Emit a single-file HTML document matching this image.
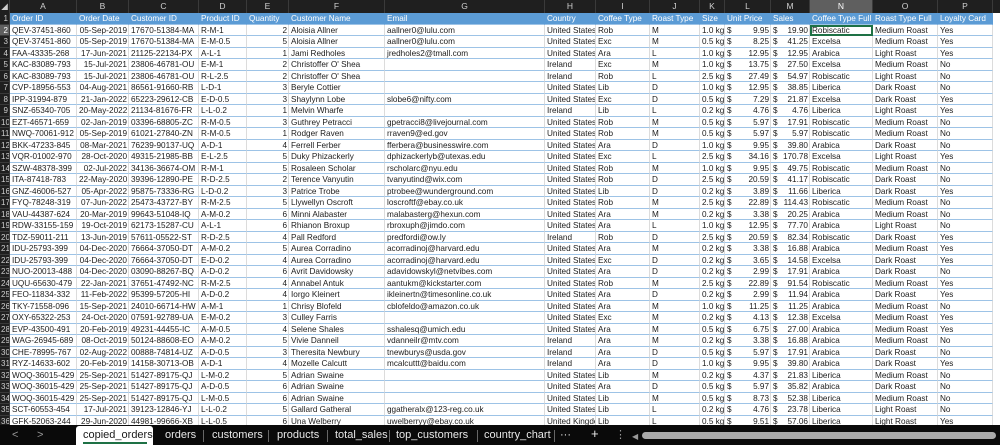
<!DOCTYPE html>
<html><head><meta charset="utf-8"><style>
*{margin:0;padding:0;box-sizing:border-box}
body{width:1000px;height:445px;overflow:hidden;background:#fff;font-family:"Liberation Sans",Arial,sans-serif;font-size:8.2px;color:#1c1c1c;position:relative}
#ch{position:absolute;left:0;top:0;height:13px;width:1000px;background:#1f1f1f;display:grid;grid-template-columns:10px 67px 52px 70px 48px 42px 96px 160px 51px 54px 50px 25px 46px 39px 63px 65px 55px 7px}
#ch span{color:#cfcfcf;text-align:center;line-height:13px;border-right:1px solid #3a3a3a;font-size:8.5px}
#ch span.sel{background:#5f5f5f;color:#fff}
#g{position:absolute;left:0;top:13px;width:1000px;display:grid;grid-template-columns:10px 67px 52px 70px 48px 42px 96px 160px 51px 54px 50px 25px 46px 39px 63px 65px 55px 7px;grid-auto-rows:11.5px}
#g i{font-style:normal;white-space:nowrap;overflow:hidden;padding:0 1px 0 2px;line-height:11px;border-right:1px solid #dcdcdc;border-bottom:1px solid #9dc3e6}
#g i.h{background:#1f1f1f;color:#cfcfcf;text-align:right;padding:0 1px;border-right:1px solid #3a3a3a;border-bottom:1px solid #3a3a3a;font-size:8px}
#g i.hs{background:#5f5f5f;color:#fff}
#g i.e{border:none;background:#fff}
#g i.r{text-align:right}
#g i.m{display:flex;justify-content:space-between}
#g u{text-decoration:none}
#g .hd i:not(.h):not(.e){background:#5b9bd5;color:#fff;border-right:1px solid #5b9bd5}
#g i.sc{outline:2px solid #1e7145;outline-offset:-2px}
#tabs{position:absolute;left:0;top:425px;width:1000px;height:20px;background:#0a0a0a;color:#e8e8e8;font-size:11px}
#tabs span{position:absolute;top:4px;line-height:13px}
#tabs .sep{width:1px;height:12px;background:#666;top:5px}
#act{position:absolute;left:76px;top:1px;width:77px;height:19px;background:#fff;border-radius:3px 3px 0 0}
#tabs span.a{color:#1a1a1a;left:83px}
#ul{position:absolute;left:83px;top:17px;width:64px;height:2px;background:#1e7145}
#sb{position:absolute;left:642px;top:7px;width:354px;height:7px;background:#a9a9a9;border-radius:4px}
</style></head><body>
<div id="ch"><span>◢</span><span>A</span><span>B</span><span>C</span><span>D</span><span>E</span><span>F</span><span>G</span><span>H</span><span>I</span><span>J</span><span>K</span><span>L</span><span>M</span><span class="sel">N</span><span>O</span><span>P</span><span style="border:none"></span></div>
<div id="g">
<div class="hd" style="display:contents"><i class="h">1</i><i>Order ID</i><i>Order Date</i><i>Customer ID</i><i>Product ID</i><i>Quantity</i><i>Customer Name</i><i>Email</i><i>Country</i><i>Coffee Type</i><i>Roast Type</i><i>Size</i><i>Unit Price</i><i>Sales</i><i>Coffee Type Full</i><i>Roast Type Full</i><i>Loyalty Card</i><i class="e"></i></div>
<i class="h hs">2</i><i>QEV-37451-860</i><i class="r">05-Sep-2019</i><i>17670-51384-MA</i><i>R-M-1</i><i class="r">2</i><i>Aloisia Allner</i><i>aallner0@lulu.com</i><i>United States</i><i>Rob</i><i>M</i><i>1.0 kg</i><i class="m"><u>$</u>9.95</i><i class="m"><u>$</u>19.90</i><i class="sc">Robiscatic</i><i>Medium Roast</i><i>Yes</i><i class="e"></i>
<i class="h">3</i><i>QEV-37451-860</i><i class="r">05-Sep-2019</i><i>17670-51384-MA</i><i>E-M-0.5</i><i class="r">5</i><i>Aloisia Allner</i><i>aallner0@lulu.com</i><i>United States</i><i>Exc</i><i>M</i><i>0.5 kg</i><i class="m"><u>$</u>8.25</i><i class="m"><u>$</u>41.25</i><i>Excelsa</i><i>Medium Roast</i><i>Yes</i><i class="e"></i>
<i class="h">4</i><i>FAA-43335-268</i><i class="r">17-Jun-2021</i><i>21125-22134-PX</i><i>A-L-1</i><i class="r">1</i><i>Jami Redholes</i><i>jredholes2@tmall.com</i><i>United States</i><i>Ara</i><i>L</i><i>1.0 kg</i><i class="m"><u>$</u>12.95</i><i class="m"><u>$</u>12.95</i><i>Arabica</i><i>Light Roast</i><i>Yes</i><i class="e"></i>
<i class="h">5</i><i>KAC-83089-793</i><i class="r">15-Jul-2021</i><i>23806-46781-OU</i><i>E-M-1</i><i class="r">2</i><i>Christoffer O' Shea</i><i></i><i>Ireland</i><i>Exc</i><i>M</i><i>1.0 kg</i><i class="m"><u>$</u>13.75</i><i class="m"><u>$</u>27.50</i><i>Excelsa</i><i>Medium Roast</i><i>No</i><i class="e"></i>
<i class="h">6</i><i>KAC-83089-793</i><i class="r">15-Jul-2021</i><i>23806-46781-OU</i><i>R-L-2.5</i><i class="r">2</i><i>Christoffer O' Shea</i><i></i><i>Ireland</i><i>Rob</i><i>L</i><i>2.5 kg</i><i class="m"><u>$</u>27.49</i><i class="m"><u>$</u>54.97</i><i>Robiscatic</i><i>Light Roast</i><i>No</i><i class="e"></i>
<i class="h">7</i><i>CVP-18956-553</i><i class="r">04-Aug-2021</i><i>86561-91660-RB</i><i>L-D-1</i><i class="r">3</i><i>Beryle Cottier</i><i></i><i>United States</i><i>Lib</i><i>D</i><i>1.0 kg</i><i class="m"><u>$</u>12.95</i><i class="m"><u>$</u>38.85</i><i>Liberica</i><i>Dark Roast</i><i>No</i><i class="e"></i>
<i class="h">8</i><i>IPP-31994-879</i><i class="r">21-Jan-2022</i><i>65223-29612-CB</i><i>E-D-0.5</i><i class="r">3</i><i>Shaylynn Lobe</i><i>slobe6@nifty.com</i><i>United States</i><i>Exc</i><i>D</i><i>0.5 kg</i><i class="m"><u>$</u>7.29</i><i class="m"><u>$</u>21.87</i><i>Excelsa</i><i>Dark Roast</i><i>Yes</i><i class="e"></i>
<i class="h">9</i><i>SNZ-65340-705</i><i class="r">20-May-2022</i><i>21134-81676-FR</i><i>L-L-0.2</i><i class="r">1</i><i>Melvin Wharfe</i><i></i><i>Ireland</i><i>Lib</i><i>L</i><i>0.2 kg</i><i class="m"><u>$</u>4.76</i><i class="m"><u>$</u>4.76</i><i>Liberica</i><i>Light Roast</i><i>Yes</i><i class="e"></i>
<i class="h">10</i><i>EZT-46571-659</i><i class="r">02-Jan-2019</i><i>03396-68805-ZC</i><i>R-M-0.5</i><i class="r">3</i><i>Guthrey Petracci</i><i>gpetracci8@livejournal.com</i><i>United States</i><i>Rob</i><i>M</i><i>0.5 kg</i><i class="m"><u>$</u>5.97</i><i class="m"><u>$</u>17.91</i><i>Robiscatic</i><i>Medium Roast</i><i>No</i><i class="e"></i>
<i class="h">11</i><i>NWQ-70061-912</i><i class="r">05-Sep-2019</i><i>61021-27840-ZN</i><i>R-M-0.5</i><i class="r">1</i><i>Rodger Raven</i><i>rraven9@ed.gov</i><i>United States</i><i>Rob</i><i>M</i><i>0.5 kg</i><i class="m"><u>$</u>5.97</i><i class="m"><u>$</u>5.97</i><i>Robiscatic</i><i>Medium Roast</i><i>No</i><i class="e"></i>
<i class="h">12</i><i>BKK-47233-845</i><i class="r">08-Mar-2021</i><i>76239-90137-UQ</i><i>A-D-1</i><i class="r">4</i><i>Ferrell Ferber</i><i>fferbera@businesswire.com</i><i>United States</i><i>Ara</i><i>D</i><i>1.0 kg</i><i class="m"><u>$</u>9.95</i><i class="m"><u>$</u>39.80</i><i>Arabica</i><i>Dark Roast</i><i>No</i><i class="e"></i>
<i class="h">13</i><i>VQR-01002-970</i><i class="r">28-Oct-2020</i><i>49315-21985-BB</i><i>E-L-2.5</i><i class="r">5</i><i>Duky Phizackerly</i><i>dphizackerlyb@utexas.edu</i><i>United States</i><i>Exc</i><i>L</i><i>2.5 kg</i><i class="m"><u>$</u>34.16</i><i class="m"><u>$</u>170.78</i><i>Excelsa</i><i>Light Roast</i><i>Yes</i><i class="e"></i>
<i class="h">14</i><i>SZW-48378-399</i><i class="r">02-Jul-2022</i><i>34136-36674-OM</i><i>R-M-1</i><i class="r">5</i><i>Rosaleen Scholar</i><i>rscholarc@nyu.edu</i><i>United States</i><i>Rob</i><i>M</i><i>1.0 kg</i><i class="m"><u>$</u>9.95</i><i class="m"><u>$</u>49.75</i><i>Robiscatic</i><i>Medium Roast</i><i>No</i><i class="e"></i>
<i class="h">15</i><i>ITA-87418-783</i><i class="r">22-May-2020</i><i>39396-12890-PE</i><i>R-D-2.5</i><i class="r">2</i><i>Terence Vanyutin</i><i>tvanyutind@wix.com</i><i>United States</i><i>Rob</i><i>D</i><i>2.5 kg</i><i class="m"><u>$</u>20.59</i><i class="m"><u>$</u>41.17</i><i>Robiscatic</i><i>Dark Roast</i><i>No</i><i class="e"></i>
<i class="h">16</i><i>GNZ-46006-527</i><i class="r">05-Apr-2022</i><i>95875-73336-RG</i><i>L-D-0.2</i><i class="r">3</i><i>Patrice Trobe</i><i>ptrobee@wunderground.com</i><i>United States</i><i>Lib</i><i>D</i><i>0.2 kg</i><i class="m"><u>$</u>3.89</i><i class="m"><u>$</u>11.66</i><i>Liberica</i><i>Dark Roast</i><i>Yes</i><i class="e"></i>
<i class="h">17</i><i>FYQ-78248-319</i><i class="r">07-Jun-2022</i><i>25473-43727-BY</i><i>R-M-2.5</i><i class="r">5</i><i>Llywellyn Oscroft</i><i>loscroftf@ebay.co.uk</i><i>United States</i><i>Rob</i><i>M</i><i>2.5 kg</i><i class="m"><u>$</u>22.89</i><i class="m"><u>$</u>114.43</i><i>Robiscatic</i><i>Medium Roast</i><i>No</i><i class="e"></i>
<i class="h">18</i><i>VAU-44387-624</i><i class="r">20-Mar-2019</i><i>99643-51048-IQ</i><i>A-M-0.2</i><i class="r">6</i><i>Minni Alabaster</i><i>malabasterg@hexun.com</i><i>United States</i><i>Ara</i><i>M</i><i>0.2 kg</i><i class="m"><u>$</u>3.38</i><i class="m"><u>$</u>20.25</i><i>Arabica</i><i>Medium Roast</i><i>No</i><i class="e"></i>
<i class="h">19</i><i>RDW-33155-159</i><i class="r">19-Oct-2019</i><i>62173-15287-CU</i><i>A-L-1</i><i class="r">6</i><i>Rhianon Broxup</i><i>rbroxuph@jimdo.com</i><i>United States</i><i>Ara</i><i>L</i><i>1.0 kg</i><i class="m"><u>$</u>12.95</i><i class="m"><u>$</u>77.70</i><i>Arabica</i><i>Light Roast</i><i>No</i><i class="e"></i>
<i class="h">20</i><i>TDZ-59011-211</i><i class="r">13-Jun-2019</i><i>57611-05522-ST</i><i>R-D-2.5</i><i class="r">4</i><i>Pall Redford</i><i>predfordi@ow.ly</i><i>Ireland</i><i>Rob</i><i>D</i><i>2.5 kg</i><i class="m"><u>$</u>20.59</i><i class="m"><u>$</u>82.34</i><i>Robiscatic</i><i>Dark Roast</i><i>Yes</i><i class="e"></i>
<i class="h">21</i><i>IDU-25793-399</i><i class="r">04-Dec-2020</i><i>76664-37050-DT</i><i>A-M-0.2</i><i class="r">5</i><i>Aurea Corradino</i><i>acorradinoj@harvard.edu</i><i>United States</i><i>Ara</i><i>M</i><i>0.2 kg</i><i class="m"><u>$</u>3.38</i><i class="m"><u>$</u>16.88</i><i>Arabica</i><i>Medium Roast</i><i>Yes</i><i class="e"></i>
<i class="h">22</i><i>IDU-25793-399</i><i class="r">04-Dec-2020</i><i>76664-37050-DT</i><i>E-D-0.2</i><i class="r">4</i><i>Aurea Corradino</i><i>acorradinoj@harvard.edu</i><i>United States</i><i>Exc</i><i>D</i><i>0.2 kg</i><i class="m"><u>$</u>3.65</i><i class="m"><u>$</u>14.58</i><i>Excelsa</i><i>Dark Roast</i><i>Yes</i><i class="e"></i>
<i class="h">23</i><i>NUO-20013-488</i><i class="r">04-Dec-2020</i><i>03090-88267-BQ</i><i>A-D-0.2</i><i class="r">6</i><i>Avrit Davidowsky</i><i>adavidowskyl@netvibes.com</i><i>United States</i><i>Ara</i><i>D</i><i>0.2 kg</i><i class="m"><u>$</u>2.99</i><i class="m"><u>$</u>17.91</i><i>Arabica</i><i>Dark Roast</i><i>No</i><i class="e"></i>
<i class="h">24</i><i>UQU-65630-479</i><i class="r">22-Jan-2021</i><i>37651-47492-NC</i><i>R-M-2.5</i><i class="r">4</i><i>Annabel Antuk</i><i>aantukm@kickstarter.com</i><i>United States</i><i>Rob</i><i>M</i><i>2.5 kg</i><i class="m"><u>$</u>22.89</i><i class="m"><u>$</u>91.54</i><i>Robiscatic</i><i>Medium Roast</i><i>Yes</i><i class="e"></i>
<i class="h">25</i><i>FEO-11834-332</i><i class="r">11-Feb-2022</i><i>95399-57205-HI</i><i>A-D-0.2</i><i class="r">4</i><i>Iorgo Kleinert</i><i>ikleinertn@timesonline.co.uk</i><i>United States</i><i>Ara</i><i>D</i><i>0.2 kg</i><i class="m"><u>$</u>2.99</i><i class="m"><u>$</u>11.94</i><i>Arabica</i><i>Dark Roast</i><i>Yes</i><i class="e"></i>
<i class="h">26</i><i>TKY-71558-096</i><i class="r">15-Sep-2021</i><i>24010-66714-HW</i><i>A-M-1</i><i class="r">1</i><i>Chrisy Blofeld</i><i>cblofeldo@amazon.co.uk</i><i>United States</i><i>Ara</i><i>M</i><i>1.0 kg</i><i class="m"><u>$</u>11.25</i><i class="m"><u>$</u>11.25</i><i>Arabica</i><i>Medium Roast</i><i>No</i><i class="e"></i>
<i class="h">27</i><i>OXY-65322-253</i><i class="r">24-Oct-2020</i><i>07591-92789-UA</i><i>E-M-0.2</i><i class="r">3</i><i>Culley Farris</i><i></i><i>United States</i><i>Exc</i><i>M</i><i>0.2 kg</i><i class="m"><u>$</u>4.13</i><i class="m"><u>$</u>12.38</i><i>Excelsa</i><i>Medium Roast</i><i>Yes</i><i class="e"></i>
<i class="h">28</i><i>EVP-43500-491</i><i class="r">20-Feb-2019</i><i>49231-44455-IC</i><i>A-M-0.5</i><i class="r">4</i><i>Selene Shales</i><i>sshalesq@umich.edu</i><i>United States</i><i>Ara</i><i>M</i><i>0.5 kg</i><i class="m"><u>$</u>6.75</i><i class="m"><u>$</u>27.00</i><i>Arabica</i><i>Medium Roast</i><i>Yes</i><i class="e"></i>
<i class="h">29</i><i>WAG-26945-689</i><i class="r">08-Oct-2019</i><i>50124-88608-EO</i><i>A-M-0.2</i><i class="r">5</i><i>Vivie Danneil</i><i>vdanneilr@mtv.com</i><i>Ireland</i><i>Ara</i><i>M</i><i>0.2 kg</i><i class="m"><u>$</u>3.38</i><i class="m"><u>$</u>16.88</i><i>Arabica</i><i>Medium Roast</i><i>No</i><i class="e"></i>
<i class="h">30</i><i>CHE-78995-767</i><i class="r">02-Aug-2022</i><i>00888-74814-UZ</i><i>A-D-0.5</i><i class="r">3</i><i>Theresita Newbury</i><i>tnewburys@usda.gov</i><i>Ireland</i><i>Ara</i><i>D</i><i>0.5 kg</i><i class="m"><u>$</u>5.97</i><i class="m"><u>$</u>17.91</i><i>Arabica</i><i>Dark Roast</i><i>No</i><i class="e"></i>
<i class="h">31</i><i>RYZ-14633-602</i><i class="r">20-Feb-2019</i><i>14158-30713-OB</i><i>A-D-1</i><i class="r">4</i><i>Mozelle Calcutt</i><i>mcalcuttt@baidu.com</i><i>Ireland</i><i>Ara</i><i>D</i><i>1.0 kg</i><i class="m"><u>$</u>9.95</i><i class="m"><u>$</u>39.80</i><i>Arabica</i><i>Dark Roast</i><i>Yes</i><i class="e"></i>
<i class="h">32</i><i>WOQ-36015-429</i><i class="r">25-Sep-2021</i><i>51427-89175-QJ</i><i>L-M-0.2</i><i class="r">5</i><i>Adrian Swaine</i><i></i><i>United States</i><i>Lib</i><i>M</i><i>0.2 kg</i><i class="m"><u>$</u>4.37</i><i class="m"><u>$</u>21.83</i><i>Liberica</i><i>Medium Roast</i><i>No</i><i class="e"></i>
<i class="h">33</i><i>WOQ-36015-429</i><i class="r">25-Sep-2021</i><i>51427-89175-QJ</i><i>A-D-0.5</i><i class="r">6</i><i>Adrian Swaine</i><i></i><i>United States</i><i>Ara</i><i>D</i><i>0.5 kg</i><i class="m"><u>$</u>5.97</i><i class="m"><u>$</u>35.82</i><i>Arabica</i><i>Dark Roast</i><i>No</i><i class="e"></i>
<i class="h">34</i><i>WOQ-36015-429</i><i class="r">25-Sep-2021</i><i>51427-89175-QJ</i><i>L-M-0.5</i><i class="r">6</i><i>Adrian Swaine</i><i></i><i>United States</i><i>Lib</i><i>M</i><i>0.5 kg</i><i class="m"><u>$</u>8.73</i><i class="m"><u>$</u>52.38</i><i>Liberica</i><i>Medium Roast</i><i>No</i><i class="e"></i>
<i class="h">35</i><i>SCT-60553-454</i><i class="r">17-Jul-2021</i><i>39123-12846-YJ</i><i>L-L-0.2</i><i class="r">5</i><i>Gallard Gatheral</i><i>ggatheralx@123-reg.co.uk</i><i>United States</i><i>Lib</i><i>L</i><i>0.2 kg</i><i class="m"><u>$</u>4.76</i><i class="m"><u>$</u>23.78</i><i>Liberica</i><i>Light Roast</i><i>No</i><i class="e"></i>
<i class="h">36</i><i>GFK-52063-244</i><i class="r">29-Jun-2020</i><i>44981-99666-XB</i><i>L-L-0.5</i><i class="r">6</i><i>Una Welberry</i><i>uwelberryy@ebay.co.uk</i><i>United Kingdom</i><i>Lib</i><i>L</i><i>0.5 kg</i><i class="m"><u>$</u>9.51</i><i class="m"><u>$</u>57.06</i><i>Liberica</i><i>Light Roast</i><i>Yes</i><i class="e"></i>
</div>
<div id="tabs">
<span style="left:12px;color:#999">&lt;</span><span style="left:37px;color:#999">&gt;</span>
<div id="act"></div><span class="a">copied_orders</span><div id="ul"></div>
<span style="left:165px">orders</span><span class="sep" style="left:203px"></span>
<span style="left:212px">customers</span><span class="sep" style="left:268px"></span>
<span style="left:277px">products</span><span class="sep" style="left:327px"></span>
<span style="left:335px">total_sales</span><span class="sep" style="left:389px"></span>
<span style="left:396px">top_customers</span><span class="sep" style="left:477px"></span>
<span style="left:484px">country_chart</span><span class="sep" style="left:554px"></span>
<span style="left:560px">···</span><span style="left:591px;font-size:13px;top:2px">+</span>
<span style="left:615px;color:#999">⋮</span><span style="left:632px;color:#999;font-size:8px;top:5px">◀</span>
<div id="sb"></div>
</div>
</body></html>
